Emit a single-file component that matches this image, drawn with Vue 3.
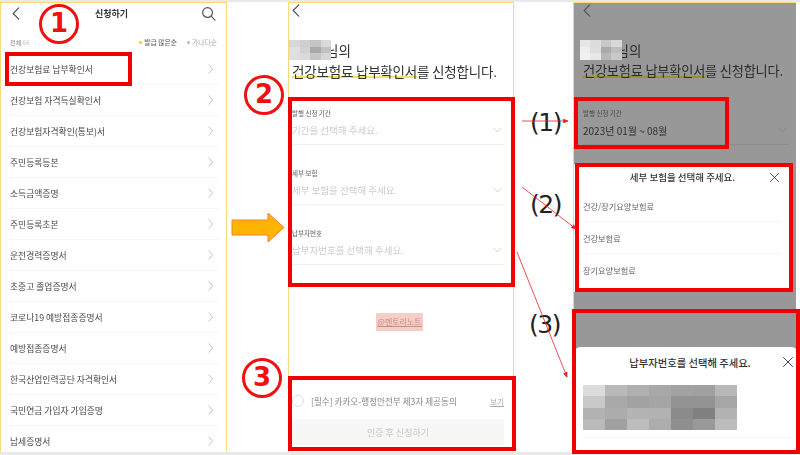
<template>
  <div class="page">
    <div class="strip top"></div>
    <div class="shots">
      <!-- 목록 화면 -->
      <section class="shot list-shot">
        <header class="list-head">
          <svg class="back" viewBox="0 0 12 16"><path d="M9 2 3 8l6 6" /></svg>
          <h1>신청하기</h1>
          <svg class="search" viewBox="0 0 16 16"><circle cx="7" cy="7" r="5.2" /><path d="m11 11 4 4" /></svg>
        </header>
        <div class="sort">
          <span class="total">전체 <em>66</em></span>
          <span class="sort-right">
            <span class="dot on"></span><b>발급 많은순</b>
            <span class="dot"></span><span class="off">가나다순</span>
          </span>
        </div>
        <ul class="docs">
          <li v-for="doc in docs" :key="doc">
            <span>{{ doc }}</span>
            <svg class="chev" viewBox="0 0 8 12"><path d="m2 1 4.5 5L2 11" /></svg>
          </li>
        </ul>
      </section>

      <div class="gap">
        <svg class="big-arrow" viewBox="0 0 54 31"><path d="M1 8h36V1l16 14.5-16 14.5v-7H1z" /></svg>
      </div>

      <!-- 입력 화면 -->
      <section class="shot form-shot">
        <svg class="back small" viewBox="0 0 12 16"><path d="M9 2 3 8l6 6" /></svg>
        <div class="name">
          <div class="mosaic name-mosaic">
            <i v-for="(c, i) in nameCells" :key="i" :style="{ background: c }"></i>
          </div>
          <span>님의</span>
        </div>
        <p class="title"><span class="mark">건강보험료 납부확인서</span>를 신청합니다.</p>
        <div class="fields">
          <div v-for="f in fields" :key="f.label" class="field">
            <label>{{ f.label }}</label>
            <div class="select">
              <span>{{ f.hint }}</span>
              <svg class="down" viewBox="0 0 12 8"><path d="m1 1.5 5 5 5-5" /></svg>
            </div>
          </div>
        </div>
        <div class="watermark-row"><span class="watermark">@멘토리노트</span></div>
        <div class="agree">
          <span class="radio"></span>
          <span class="agree-text">[필수] 카카오-행정안전부 제3자 제공동의</span>
          <u>보기</u>
        </div>
        <button class="submit">인증 후 신청하기</button>
      </section>

      <div class="gap wide"></div>

      <!-- 선택 결과 화면 -->
      <div class="result">
        <section class="shot dim-shot">
          <svg class="back small" viewBox="0 0 12 16"><path d="M9 2 3 8l6 6" /></svg>
          <div class="name">
            <div class="mosaic name-mosaic">
              <i v-for="(c, i) in dimCells" :key="i" :style="{ background: c }"></i>
            </div>
            <span>님의</span>
          </div>
          <p class="title"><span class="mark dark">건강보험료 납부확인서</span>를 신청합니다.</p>
          <div class="field picked">
            <label>발행 신청 기간</label>
            <div class="select">
              <span>2023년 01월 ~ 08월</span>
              <svg class="down" viewBox="0 0 12 8"><path d="m1 1.5 5 5 5-5" /></svg>
            </div>
          </div>
          <div class="sheet">
            <div class="sheet-head">
              <strong>세부 보험을 선택해 주세요.</strong>
              <svg class="close" viewBox="0 0 12 12"><path d="m1.5 1.5 9 9m0-9-9 9" /></svg>
            </div>
            <div v-for="o in options" :key="o" class="option">{{ o }}</div>
          </div>
        </section>
        <section class="number-shot">
          <div class="number-sheet">
            <div class="sheet-head">
              <strong>납부자번호를 선택해 주세요.</strong>
              <svg class="close" viewBox="0 0 12 12"><path d="m1.5 1.5 9 9m0-9-9 9" /></svg>
            </div>
            <div class="number-row">
              <div class="mosaic number-mosaic">
                <i v-for="(c, i) in numberCells" :key="i" :style="{ background: c }"></i>
              </div>
            </div>
          </div>
        </section>
      </div>
    </div>
    <div class="strip bottom"></div>

    <!-- 빨간 표시들 -->
    <div class="box b1"></div>
    <div class="box b2"></div>
    <div class="box b3"></div>
    <div class="box b4"></div>
    <div class="box b5"></div>
    <div class="box b6"></div>

    <div class="num n1">1</div>
    <div class="num n2">2</div>
    <div class="num n3">3</div>

    <span class="paren p1">(1)</span>
    <span class="paren p2">(2)</span>
    <span class="paren p3">(3)</span>

    <svg class="lines" viewBox="0 0 800 455">
      <defs>
        <marker id="tip" markerWidth="7" markerHeight="6" refX="6" refY="3" orient="auto">
          <path d="M0 0 7 3 0 6z" fill="#e8222a" />
        </marker>
      </defs>
      <path d="M522 121h46" marker-end="url(#tip)" />
      <path d="M522 187l54 42" marker-end="url(#tip)" />
      <path d="M517 252l50 125" marker-end="url(#tip)" />
    </svg>
  </div>
</template>

<script setup>
const docs = [
  '건강보험료 납부확인서',
  '건강보험 자격득실확인서',
  '건강보험자격확인(통보)서',
  '주민등록등본',
  '소득금액증명',
  '주민등록초본',
  '운전경력증명서',
  '초중고 졸업증명서',
  '코로나19 예방접종증명서',
  '예방접종증명서',
  '한국산업인력공단 자격확인서',
  '국민연금 가입자 가입증명',
  '납세증명서'
]

const fields = [
  { label: '발행 신청 기간', hint: '기간을 선택해 주세요.' },
  { label: '세부 보험', hint: '세부 보험을 선택해 주세요.' },
  { label: '납부자번호', hint: '납부자번호를 선택해 주세요.' }
]

const options = ['건강/장기요양보험료', '건강보험료', '장기요양보험료']

const nameCells = [
  '#d8d8d8', '#cfcfcf', '#c4c4c4', '#dadada',
  '#e0e0e0', '#d2d2d2', '#a9a9a9', '#c2c2c2',
  '#dfdfdf', '#dadada', '#c6c6c6', '#d6d6d6'
]
const dimCells = [
  '#e6e6e6', '#dcdcdc', '#c8c8c8', '#d8d8d8',
  '#eeeeee', '#dddddd', '#a9a9a9', '#bdbdbd',
  '#f0f0f0', '#e8e8e8', '#b7b7b7', '#c9c9c9'
]
const numberCells = [
  '#dcdcdc', '#b9b9b9', '#b0b0b0', '#a8a8a8', '#a2a2a2', '#a0a0a0', '#b8b8b8',
  '#c9c9c9', '#a9a9a9', '#a2a2a2', '#a5a5a5', '#939393', '#939393', '#a6a6a6',
  '#b2b2b2', '#acacac', '#b3b3b3', '#b2b2b2', '#8b8b8b', '#808080', '#b2b2b2',
  '#bababa', '#a0a0a0', '#bdbdbd', '#adadad', '#8f8f8f', '#999999', '#bcbcbc'
]
</script>

<style>
body {
  margin: 0;
  background: #fff;
}
</style>

<style scoped>
.page {
  position: relative;
  display: flex;
  flex-direction: column;
  width: 800px;
  height: 455px;
  overflow: hidden;
  background: #fff;
  font-family: "Noto Sans CJK KR", "Noto Sans", sans-serif;
  color: #444;
}
.strip {
  flex: none;
  background: #e9e9e9;
}
.strip.top {
  height: 2px;
}
.strip.bottom {
  height: 3px;
}
.shots {
  display: flex;
  flex: 1;
  min-height: 0;
}
.shot {
  box-sizing: border-box;
  border: 1.5px solid #f6d978;
  border-bottom: 0;
  filter: blur(0.35px);
}
.list-shot {
  flex: none;
  width: 227px;
  padding: 0 8px;
}
.gap {
  flex: none;
  width: 61px;
  display: flex;
  align-items: center;
  justify-content: center;
}
.gap.wide {
  width: 59px;
}
.big-arrow {
  width: 54px;
  height: 31px;
  margin-top: 1px;
}
.big-arrow path {
  fill: #ffb400;
  stroke: #f0802a;
  stroke-width: 1;
}
.back,
.search,
.chev,
.down,
.close {
  fill: none;
  stroke-linecap: round;
  stroke-linejoin: round;
}
.list-head {
  display: flex;
  align-items: center;
  justify-content: space-between;
  height: 21px;
  padding: 0 2px 0 1px;
}
.list-head h1 {
  margin: 0;
  font-size: 9px;
  font-weight: 700;
  color: #333;
}
.back {
  width: 12px;
  height: 15px;
  stroke: #555;
  stroke-width: 1.3;
}
.back.small {
  display: block;
  margin-left: -2px;
}
.search {
  width: 15px;
  height: 15px;
  stroke: #555;
  stroke-width: 1.3;
}
.sort {
  display: flex;
  align-items: center;
  justify-content: space-between;
  height: 30px;
  padding: 6px 1px 0 1px;
  box-sizing: border-box;
  font-size: 6.8px;
}
.total {
  font-size: 6.2px;
  color: #888;
}
.total em {
  font-style: normal;
  color: #c4c4c4;
}
.sort-right {
  display: flex;
  align-items: center;
  gap: 2px;
}
.sort-right b {
  font-weight: 500;
  color: #666;
  margin-right: 8px;
}
.sort-right .off {
  color: #aaa;
}
.dot {
  width: 3px;
  height: 3px;
  border-radius: 50%;
  background: #bbb;
}
.dot.on {
  background: #f6c92a;
}
.docs {
  margin: 0;
  padding: 0;
  list-style: none;
}
.docs li {
  box-sizing: border-box;
  display: flex;
  align-items: center;
  justify-content: space-between;
  height: 31px;
  padding: 0 4px 0 1px;
  border-bottom: 1px solid #f6f6f6;
  font-size: 8.8px;
  color: #484848;
}
.chev {
  width: 7px;
  height: 10px;
  stroke: #b5b5b5;
  stroke-width: 1;
}
.form-shot {
  flex: none;
  width: 226px;
  display: flex;
  flex-direction: column;
  padding: 0 9px 0 3px;
}
.name {
  display: flex;
  align-items: center;
  margin: 22px 0 0 -3px;
  height: 20px;
  font-size: 13.5px;
  color: #333;
}
.name span {
  margin-left: -5px;
}
.mosaic {
  display: grid;
}
.name-mosaic {
  position: relative;
  z-index: 1;
  grid-template-columns: repeat(4, 1fr);
  width: 42px;
  height: 20px;
}
.title {
  margin: 1px 0 0;
  font-size: 13.5px;
  line-height: 20px;
  letter-spacing: -0.2px;
  color: #333;
  white-space: nowrap;
}
.mark {
  background: linear-gradient(transparent 15px, #f6e35c 15px, #f6e35c 17px, transparent 17px);
}
.mark.dark {
  background: linear-gradient(transparent 15px, #9e8e2e 15px, #9e8e2e 17px, transparent 17px);
}
.fields {
  display: flex;
  flex-direction: column;
  gap: 21px;
  margin-top: 25px;
}
.field {
  height: 39px;
  box-sizing: border-box;
  border-bottom: 1px solid #efefef;
}
.field label {
  display: block;
  height: 14px;
  font-size: 6.5px;
  line-height: 14px;
  font-weight: 500;
  color: #777;
}
.select {
  display: flex;
  align-items: center;
  justify-content: space-between;
  height: 20px;
  padding-right: 2px;
  font-size: 9.5px;
  color: #ccc;
}
.down {
  width: 9px;
  height: 6px;
  stroke: #c2c2c2;
  stroke-width: 1;
}
.watermark-row {
  display: flex;
  justify-content: center;
  margin-top: 48px;
  padding-left: 3px;
}
.watermark {
  padding: 0 1px;
  height: 18px;
  line-height: 18px;
  font-size: 8px;
  color: #c08f8a;
  background: #f8cdc5;
  text-decoration: underline;
}
.agree {
  display: flex;
  align-items: center;
  margin-top: 60px;
  height: 20px;
  font-size: 8.6px;
  color: #888;
}
.radio {
  flex: none;
  box-sizing: border-box;
  width: 12px;
  height: 12px;
  margin-right: 7px;
  border: 1px solid #ddd;
  border-radius: 50%;
}
.agree-text {
  flex: 1;
}
.agree u {
  font-size: 7.5px;
  color: #aaa;
}
.submit {
  height: 26px;
  margin-top: 8px;
  padding: 0;
  border: 0;
  background: #f7f7f7;
  font-family: inherit;
  font-size: 9px;
  color: #c8c8c8;
}
.result {
  flex: none;
  width: 226px;
  display: flex;
  flex-direction: column;
}
.dim-shot {
  flex: none;
  width: 223px;
  height: 307px;
  padding: 0 7px 0 9px;
  background: #989898;
  border-right: 0;
}
.dim-shot .title,
.dim-shot .name {
  color: #2c2c2c;
}
.dim-shot .title {
  font-size: 13.2px;
}
.dim-shot .name {
  margin-left: -3.5px;
}
.dim-shot .back.small {
  margin-left: -2.5px;
}
.picked {
  width: 100%;
  margin-top: 25px;
  border-bottom-color: #8d8d8d;
}
.picked label {
  color: #555;
}
.picked .select {
  font-size: 10px;
  color: #2e2e2e;
}
.picked .down {
  stroke: #868686;
}
.sheet {
  box-sizing: border-box;
  height: 128px;
  margin: 19px 0 0 -9px;
  padding: 0 8px 0 9px;
  width: 216px;
  background: #fff;
}
.sheet-head {
  position: relative;
  display: flex;
  align-items: center;
  justify-content: center;
  height: 26px;
  font-size: 9.5px;
  color: #333;
}
.sheet-head strong {
  font-weight: 500;
}
.close {
  position: absolute;
  right: 2px;
  top: 8px;
  width: 11px;
  height: 11px;
  stroke: #444;
  stroke-width: 1;
}
.option {
  box-sizing: border-box;
  display: flex;
  align-items: center;
  height: 32px;
  border-bottom: 1px solid #f7f7f7;
  font-size: 8.2px;
  color: #666;
}
.option:last-child {
  border-bottom: 0;
}
.number-shot {
  flex: 1;
  display: flex;
  flex-direction: column;
  justify-content: flex-end;
  background: #989898;
  margin-top: 1px;
}
.number-sheet {
  height: 105px;
  box-sizing: border-box;
  padding: 0 6px 0 10px;
  background: #fff;
  border-radius: 8px 8px 0 0;
}
.number-sheet .sheet-head {
  height: 30px;
  padding-left: 4px;
  font-size: 10.3px;
}
.number-sheet .close {
  right: -1px;
  top: 9px;
  width: 12px;
  height: 12px;
}
.number-row {
  padding: 8px 0 7px;
  border-bottom: 1px solid #f6f6f6;
}
.number-mosaic {
  grid-template-columns: repeat(7, 22px);
  grid-auto-rows: 11.25px;
  filter: blur(0.6px);
}
.box {
  position: absolute;
  box-sizing: border-box;
  border: 4px solid #f00000;
}
.b1 { left: 5px; top: 52px; width: 127px; height: 34px; }
.b2 { left: 288px; top: 97px; width: 227px; height: 190px; }
.b3 { left: 288px; top: 376px; width: 228px; height: 75px; }
.b4 { left: 574px; top: 97px; width: 155px; height: 52px; }
.b5 { left: 575px; top: 163px; width: 218px; height: 129px; }
.b6 { left: 572px; top: 309px; width: 228px; height: 145px; }
.num {
  position: absolute;
  box-sizing: border-box;
  width: 40px;
  height: 40px;
  border: 3.5px solid #ef1010;
  border-radius: 50%;
  font-family: "DejaVu Sans", sans-serif;
  font-size: 26px;
  font-weight: 700;
  line-height: 32px;
  text-align: center;
  color: #ef1010;
}
.n1 { left: 39px; top: 4px; }
.n2 { left: 244px; top: 75px; }
.n3 { left: 242px; top: 358px; }
.paren {
  position: absolute;
  font-family: "DejaVu Sans", sans-serif;
  font-size: 25px;
  letter-spacing: -1.5px;
  line-height: 34px;
  color: #222;
}
.p1 { left: 530px; top: 106px; }
.p2 { left: 530px; top: 188px; }
.p3 { left: 529px; top: 308px; }
.lines {
  position: absolute;
  left: 0;
  top: 0;
  width: 800px;
  height: 455px;
  pointer-events: none;
}
.lines path {
  fill: none;
  stroke: #e8222a;
  stroke-width: 0.8;
}
.lines marker path {
  fill: #e8222a;
  stroke: none;
}
</style>
